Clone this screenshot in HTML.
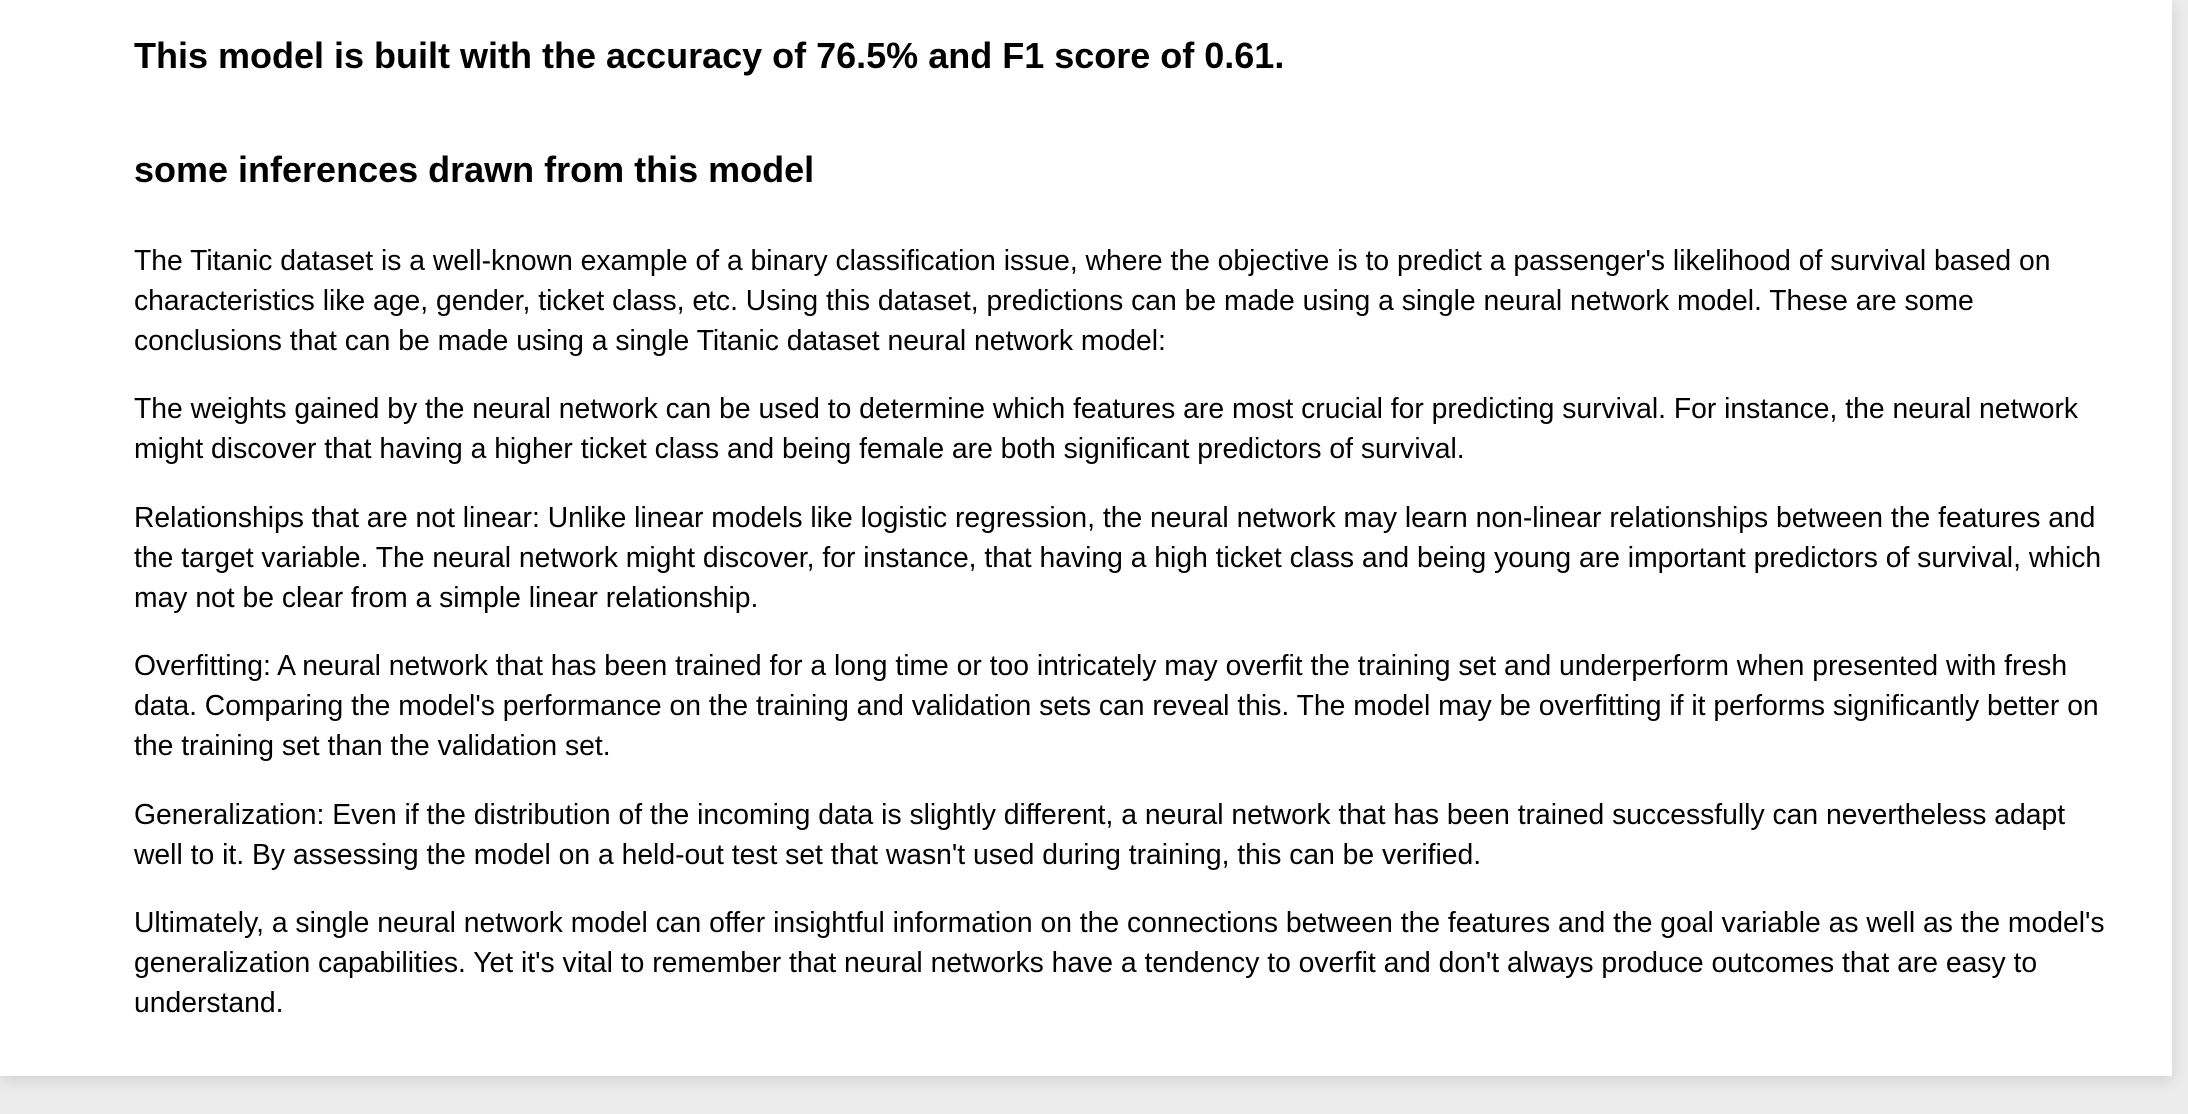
<!DOCTYPE html>
<html><head><meta charset="utf-8"><style>
html,body{margin:0;padding:0;}
body{width:2188px;height:1114px;background:#ececec;overflow:hidden;font-family:"Liberation Sans",Arial,sans-serif;color:#000;}
.card{position:absolute;left:0;top:0;width:2172px;height:1076px;background:#fff;box-shadow:0 4px 16px rgba(0,0,0,0.12);}
.c{position:absolute;left:134px;width:1985px;}
h1,h2{margin:0;font-weight:bold;font-size:36px;line-height:40px;position:absolute;left:134px;white-space:nowrap;}
p{margin:0 0 29px 0;font-size:28.3px;line-height:39.8px;}
</style></head><body>
<div class="card">
<h1 style="top:36px">This model is built with the accuracy of 76.5% and F1 score of 0.61.</h1>
<h2 style="top:150px">some inferences drawn from this model</h2>
<div class="c" style="top:241px">
<p>The Titanic dataset is a well-known example of a binary classification issue, where the objective is to predict a passenger's likelihood of survival based on characteristics like age, gender, ticket class, etc. Using this dataset, predictions can be made using a single neural network model. These are some conclusions that can be made using a single Titanic dataset neural network model:</p>
<p>The weights gained by the neural network can be used to determine which features are most crucial for predicting survival. For instance, the neural network might discover that having a higher ticket class and being female are both significant predictors of survival.</p>
<p>Relationships that are not linear: Unlike linear models like logistic regression, the neural network may learn non-linear relationships between the features and the target variable. The neural network might discover, for instance, that having a high ticket class and being young are important predictors of survival, which may not be clear from a simple linear relationship.</p>
<p>Overfitting: A neural network that has been trained for a long time or too intricately may overfit the training set and underperform when presented with fresh data. Comparing the model's performance on the training and validation sets can reveal this. The model may be overfitting if it performs significantly better on the training set than the validation set.</p>
<p>Generalization: Even if the distribution of the incoming data is slightly different, a neural network that has been trained successfully can nevertheless adapt well to it. By assessing the model on a held-out test set that wasn't used during training, this can be verified.</p>
<p>Ultimately, a single neural network model can offer insightful information on the connections between the features and the goal variable as well as the model's generalization capabilities. Yet it's vital to remember that neural networks have a tendency to overfit and don't always produce outcomes that are easy to understand.</p>
</div>
</div>
</body></html>
